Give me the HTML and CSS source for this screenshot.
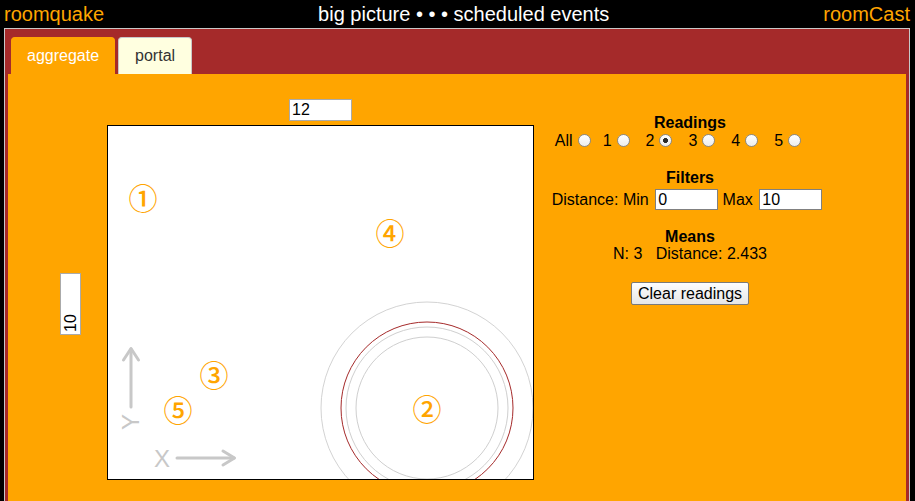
FILE: index.html
```html
<!DOCTYPE html>
<html>
<head>
<meta charset="utf-8">
<title>roomquake</title>
<link rel="stylesheet" href="styles.css">
</head>
<body>
<header class="topbar">
  <span class="brand">roomquake</span>
  <span class="title">big picture • • • scheduled events</span>
  <span class="brand">roomCast</span>
</header>
<div class="panel">
  <div class="tabs">
    <div class="tab active">aggregate</div>
    <div class="tab">portal</div>
  </div>
  <div class="content">
    <div class="plot">
      <div class="cell-empty"></div>
      <input class="num-input top-input" type="text" value="12">
      <div class="side-input-wrap">
        <input class="num-input side-input" type="text" value="10">
      </div>
      <div class="canvas">
        <svg width="425" height="353" viewBox="0 0 425 353">
          <g fill="none" stroke-width="1">
            <circle cx="319" cy="282" r="106" stroke="#d3d3d3"/>
            <circle cx="319" cy="282" r="86" stroke="#a52a2a"/>
            <circle cx="319" cy="282" r="81" stroke="#cfcfcf"/>
            <circle cx="319" cy="282" r="71" stroke="#cfcfcf"/>
          </g>
          <g stroke="#c8c8c8" stroke-width="3" fill="none" stroke-linecap="round" stroke-linejoin="round">
            <path d="M23 281 V223"/>
            <path d="M15.5 234 L23 222.5 L30.5 234"/>
            <path d="M69 332 H126"/>
            <path d="M115 325 L126.5 332 L115 339"/>
          </g>
          <text class="axis" x="54" y="332">X</text>
          <text class="axis" x="0" y="0" transform="translate(22 296) rotate(-90)">Y</text>
          <text class="mark" x="35" y="71">①</text>
          <text class="mark" x="282" y="106">④</text>
          <text class="mark" x="106" y="248">③</text>
          <text class="mark" x="70" y="283">⑤</text>
          <text class="mark" x="319" y="282">②</text>
        </svg>
      </div>
    </div>
    <div class="side">
      <div class="block">
        <div class="heading">Readings</div>
        <div class="radios">
          <label class="opt opt-all">All<input type="radio" name="r"></label>
          <label class="opt">1<input type="radio" name="r"></label>
          <label class="opt">2<input type="radio" name="r" checked></label>
          <label class="opt">3<input type="radio" name="r"></label>
          <label class="opt">4<input type="radio" name="r"></label>
          <label class="opt">5<input type="radio" name="r"></label>
        </div>
      </div>
      <div class="block filters">
        <div class="heading">Filters</div>
        <div class="row filter-row">Distance: Min <input class="num-input filter-input" type="text" value="0"> Max <input class="num-input filter-input" type="text" value="10"></div>
      </div>
      <div class="block means">
        <div class="heading">Means</div>
        <div class="row">N: 3&nbsp;&nbsp; Distance: 2.433</div>
      </div>
      <div class="block actions">
        <button class="btn" type="button">Clear readings</button>
      </div>
    </div>
  </div>
</div>
</body>
</html>
```
FILE: styles.css
```css
html, body {
  margin: 0;
  padding: 0;
  background: #000;
  overflow: hidden;
}
body {
  font-family: "Liberation Sans", Arial, sans-serif;
  font-size: 16px;
  color: #000;
}
.topbar {
  height: 28px;
  display: flex;
  justify-content: space-between;
  align-items: flex-start;
  padding: 0 5px 0 4px;
  font-size: 20px;
  line-height: 28px;
}
.brand {
  color: #ffa500;
}
.title {
  color: #fff;
}
.panel {
  margin: 0 5px 0 4px;
  border: 1px solid #c8c8c8;
  border-bottom: none;
  background: #a52a2a;
  padding: 8px 3px 0 3px;
}
.tabs {
  display: flex;
  gap: 3px;
  padding-left: 3px;
  height: 37px;
}
.tab {
  box-sizing: border-box;
  height: 37px;
  padding: 0 16px;
  border: 1px solid #c8c8c8;
  border-bottom: none;
  border-radius: 4px 4px 0 0;
  background: #ffffe0;
  color: #333;
  line-height: 36px;
  font-size: 16px;
}
.tab.active {
  background: #ffa500;
  border-color: #ffa500;
  color: #fff;
  padding: 0 15px;
}
.content {
  background: #ffa500;
  height: 427px;
  display: flex;
  align-items: flex-start;
  padding: 25px 0 0 52px;
  box-sizing: border-box;
}
.plot {
  display: grid;
  grid-template-columns: 47px 427px;
  grid-template-rows: auto auto;
}
.num-input {
  box-sizing: border-box;
  font-family: "Liberation Sans", Arial, sans-serif;
  font-size: 16px;
  border: 1px solid #aaa;
  background: #fff;
  padding: 0 2px;
  margin: 0;
  color: #000;
  outline: none;
}
.top-input {
  width: 63px;
  height: 22px;
  justify-self: center;
  margin-bottom: 4px;
}
.side-input-wrap {
  width: 21px;
  height: 62px;
  align-self: center;
  margin-top: 3px;
}
.side-input {
  width: 62px;
  height: 21px;
  display: block;
  transform: translate(-20.5px, 20.5px) rotate(-90deg);
}
.canvas {
  box-sizing: border-box;
  width: 427px;
  height: 355px;
  border: 1px solid #000;
  background: #fff;
  overflow: hidden;
}
.canvas svg {
  display: block;
}
.mark {
  fill: #ffa500;
  font-family: "Noto Sans CJK JP", "DejaVu Sans", sans-serif;
  font-size: 29px;
  font-weight: 500;
  text-anchor: middle;
  dominant-baseline: central;
}
.axis {
  fill: #c8c8c8;
  font-family: "Liberation Sans", Arial, sans-serif;
  font-size: 24px;
  text-anchor: middle;
  dominant-baseline: central;
}
.side {
  width: 280px;
  margin-left: 16px;
  padding-top: 15px;
  text-align: center;
}
.heading {
  font-weight: bold;
  line-height: 17px;
}
.radios {
  display: flex;
  justify-content: center;
  line-height: 18px;
  padding-right: 21px;
  white-space: nowrap;
}
.opt {
  margin-right: 13px;
}
.opt-all {
  margin-right: 9px;
}
.opt:last-child {
  margin-right: 0;
}
.opt input {
  -webkit-appearance: none;
  appearance: none;
  box-sizing: border-box;
  width: 13px;
  height: 13px;
  margin: 3px 3px 0 5px;
  border: 1px solid #8a8a8a;
  border-radius: 50%;
  background: linear-gradient(#ffffff, #ededed);
  vertical-align: -1px;
}
.opt input:checked {
  background: radial-gradient(circle, #2a2a2a 0 2.2px, transparent 2.8px), linear-gradient(#ffffff, #ededed);
}
.filters {
  margin-top: 19px;
}
.row {
  line-height: 18px;
}
.filters .row {
  margin-top: 3px;
}
.filter-row {
  padding-right: 6px;
  white-space: nowrap;
}
.filter-input {
  width: 63px;
  height: 21px;
  margin-left: 2px;
  border-color: #808080;
}
.means {
  margin-top: 18px;
}
.actions {
  margin-top: 19px;
}
.btn {
  font-family: "Liberation Sans", Arial, sans-serif;
  font-size: 16px;
  height: 23px;
  padding: 0 6px;
  border: 1px solid #7a7a7a;
  border-radius: 2px;
  background: linear-gradient(#fdfdfd, #e6e6e6);
  color: #000;
  line-height: 20px;
}
```
